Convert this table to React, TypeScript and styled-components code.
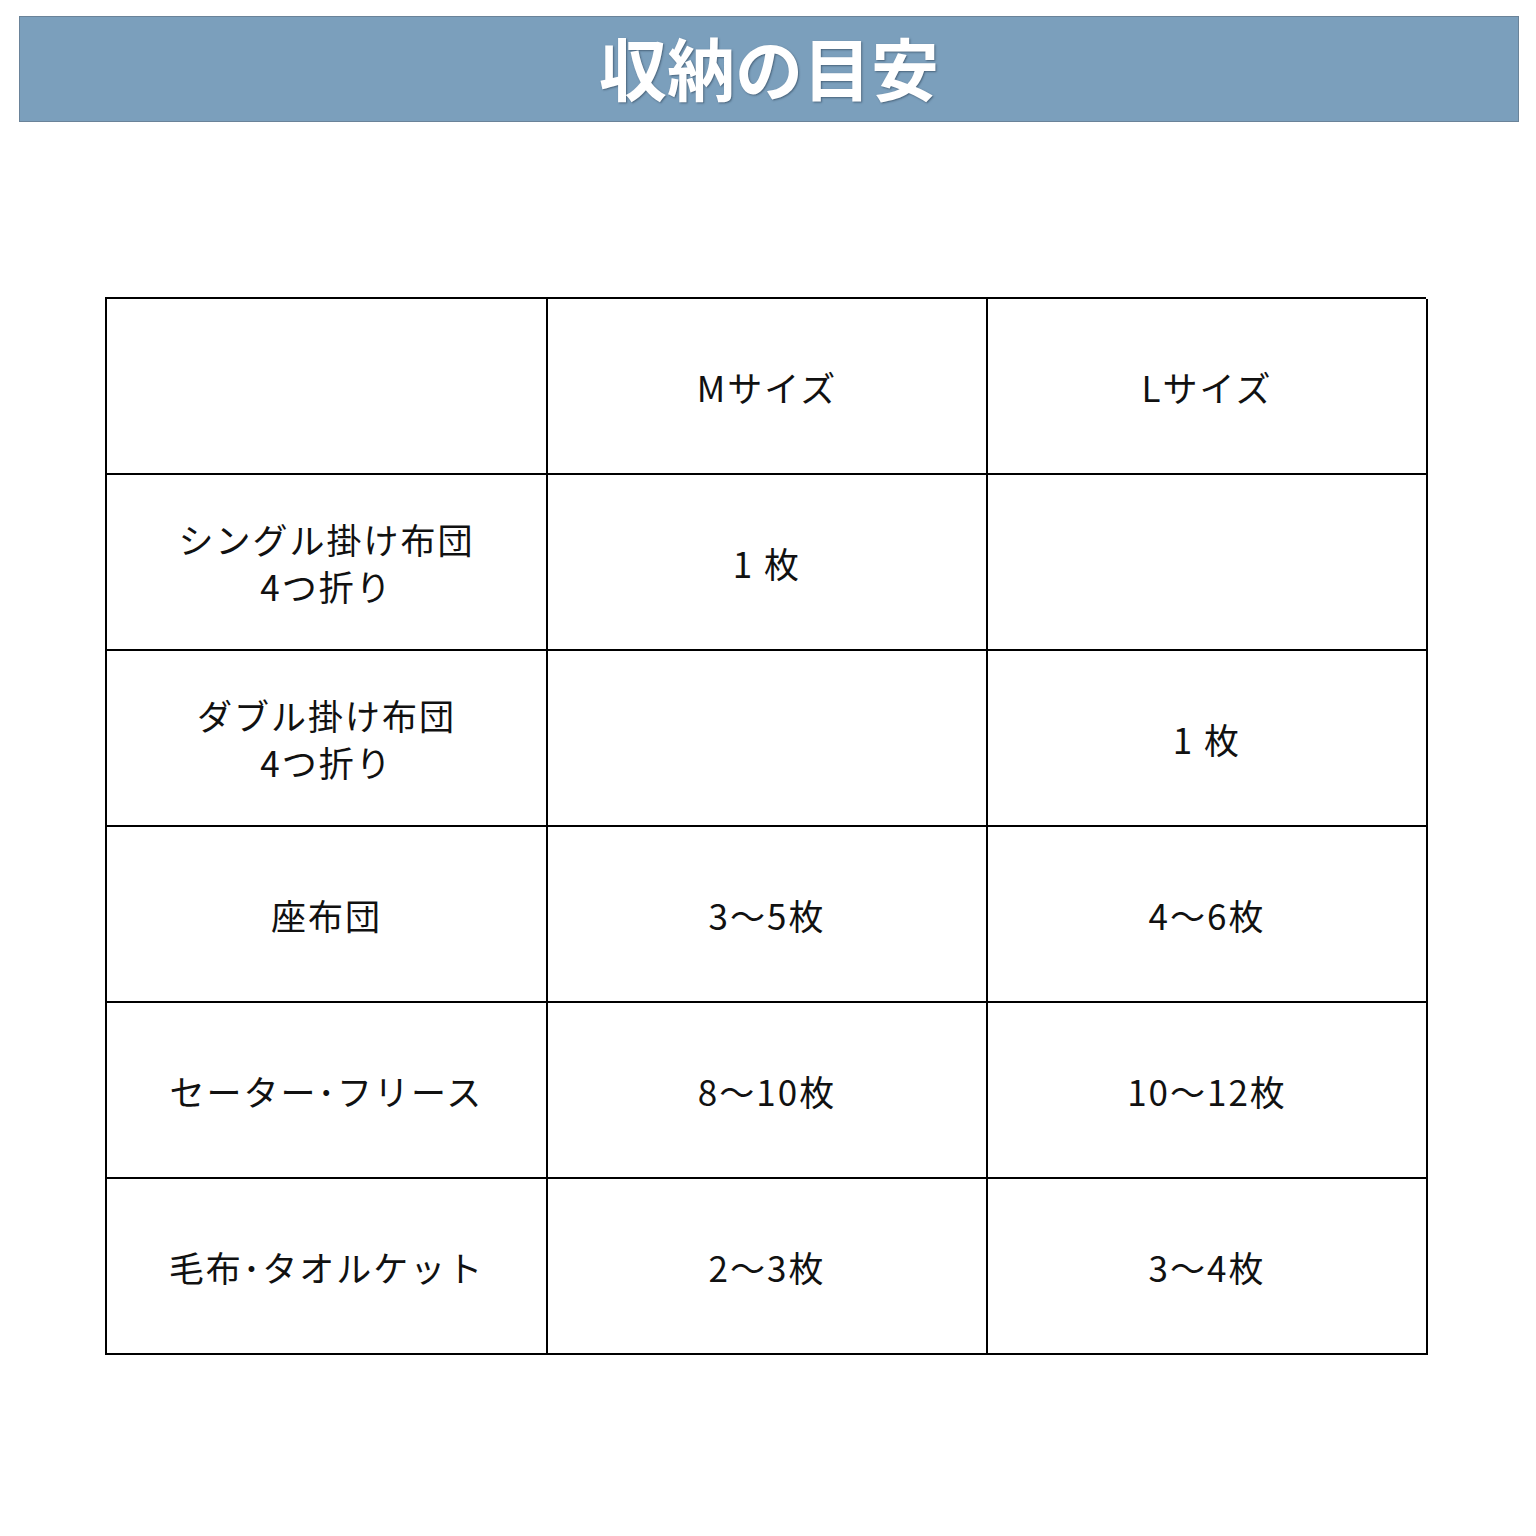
import React, {FunctionComponent} from 'react';
import styled, {createGlobalStyle} from 'styled-components';

const GlobalStyle = createGlobalStyle`
  html, body {
    margin: 0;
    padding: 0;
    background: #ffffff;
  }
  body {
    font-family: "Noto Sans CJK JP", "Noto Sans", sans-serif;
  }
`;

const Page = styled.div`
  width: 1536px;
  height: 1536px;
  padding-top: 16px;
  box-sizing: border-box;
  background: #ffffff;
`;

const TitleBar = styled.div`
  margin-left: 19px;
  width: 1500px;
  height: 106px;
  box-sizing: border-box;
  border: 1px solid #6a8399;
  background-color: #7b9fbc;
  display: flex;
  align-items: center;
  justify-content: center;
`;

const Title = styled.h1`
  margin: 0;
  font-family: "Noto Sans CJK JP", sans-serif;
  font-size: 68px;
  font-weight: 700;
  color: #ffffff;
  line-height: 1;
  padding-bottom: 4px;
  text-shadow: 1px 1px 2px rgba(40, 60, 80, 0.6);
`;

const Grid = styled.div`
  margin: 175px 0 0 105px;
  width: 1321px;
  display: grid;
  grid-template-columns: 441px 440px 440px;
  grid-auto-rows: 176px;
  border-top: 2px solid #000;
  border-left: 2px solid #000;
  box-sizing: border-box;
`;

const Cell = styled.div`
  border-right: 2px solid #000;
  border-bottom: 2px solid #000;
  display: flex;
  align-items: center;
  justify-content: center;
  text-align: center;
  font-family: "Noto Sans CJK JP", sans-serif;
  font-size: 35px;
  font-weight: 400;
  letter-spacing: 2px;
  line-height: 47px;
  color: #111;
  white-space: pre-line;
`;

const rows: [string, string, string][] = [
  ['', 'Mサイズ', 'Lサイズ'],
  ['シングル掛け布団\n4つ折り', '1 枚', ''],
  ['ダブル掛け布団\n4つ折り', '', '1 枚'],
  ['座布団', '3～5枚', '4～6枚'],
  ['セーター･フリース', '8～10枚', '10～12枚'],
  ['毛布･タオルケット', '2～3枚', '3～4枚'],
];

const App: FunctionComponent = () => {
  return (
    <>
      <GlobalStyle />
      <Page>
        <TitleBar>
          <Title>収納の目安</Title>
        </TitleBar>
        <Grid>
          {rows.map((row, i) =>
            row.map((text, j) => <Cell key={`${i}-${j}`}>{text}</Cell>)
          )}
        </Grid>
      </Page>
    </>
  );
};

export default App;
